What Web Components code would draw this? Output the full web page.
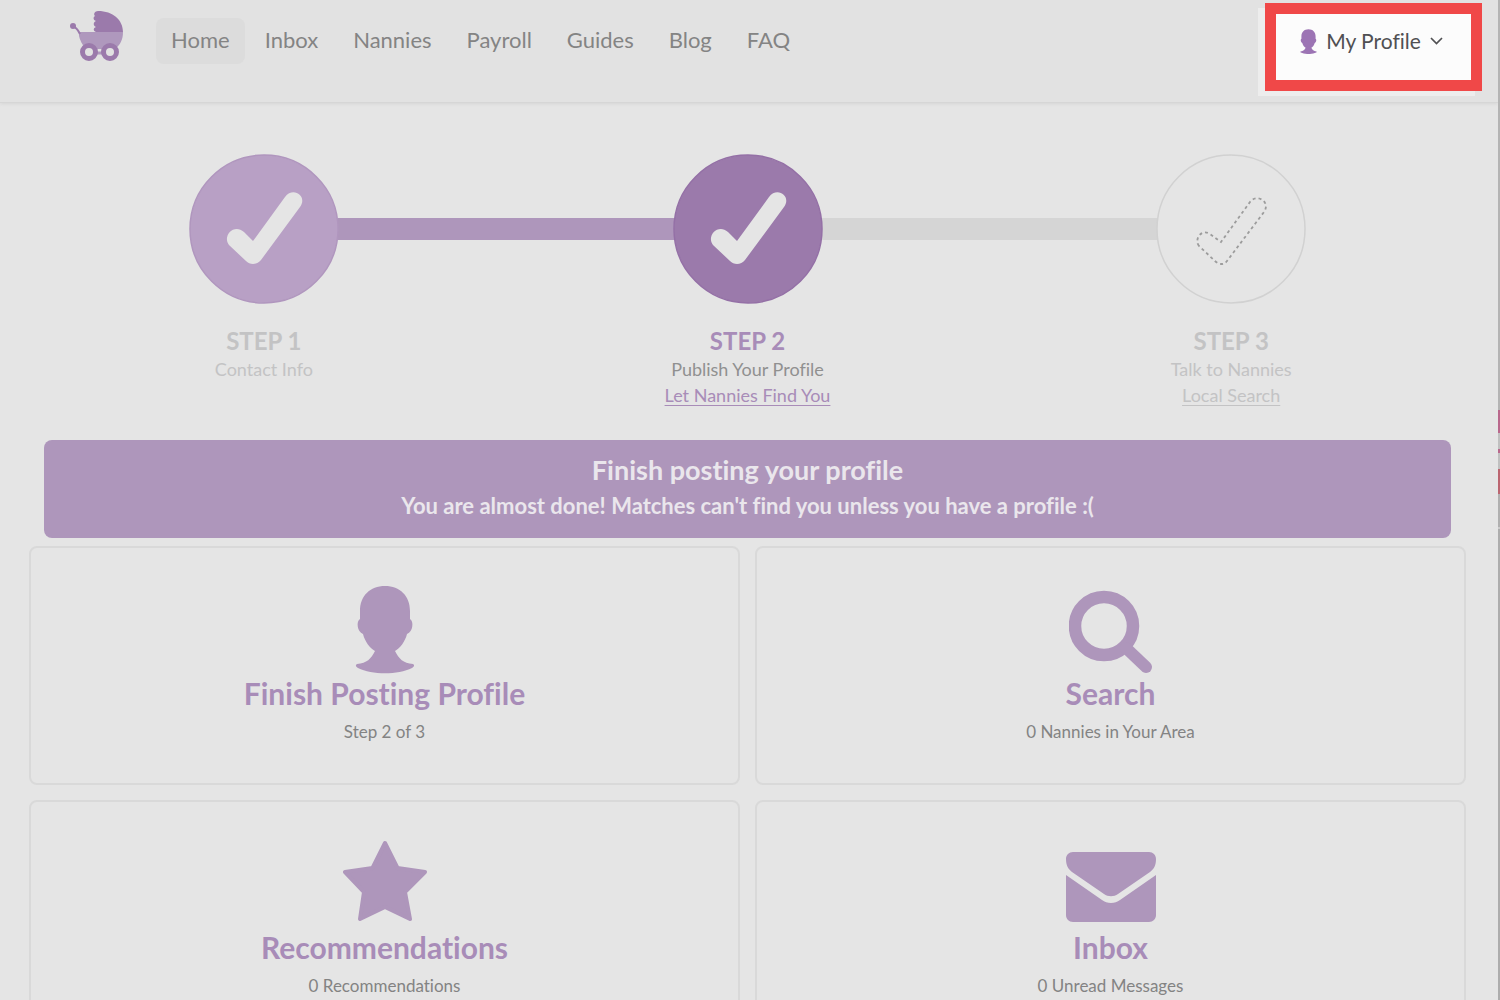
<!DOCTYPE html>
<html lang="en">
<head>
<meta charset="utf-8">
<title>Home</title>
<style>
  html { scrollbar-width: none; }
  body {
    margin: 0;
    font-family: Lato, "Open Sans", sans-serif;
    font-variant-ligatures: no-common-ligatures;
    background: #e5e5e5;
    color: #7f7f7f;
    --violet: #ae96bb;
    --violet-deep: #9b7aab;
    --violet-text: #a88cb8;
    --muted: #c3c3c4;
  }
</style>
</head>
<body>
<app-shell>
  <site-header slot="header">
    <nav-link href="#home" current>Home</nav-link>
    <nav-link href="#inbox">Inbox</nav-link>
    <nav-link href="#nannies">Nannies</nav-link>
    <nav-link href="#payroll">Payroll</nav-link>
    <nav-link href="#guides">Guides</nav-link>
    <nav-link href="#blog">Blog</nav-link>
    <nav-link href="#faq">FAQ</nav-link>
    <profile-menu slot="profile">My Profile</profile-menu>
  </site-header>
  <step-list>
    <progress-step state="done" label="STEP 1" text="Contact Info"></progress-step>
    <progress-step state="active" label="STEP 2" text="Publish Your Profile" link="Let Nannies Find You"></progress-step>
    <progress-step state="todo" label="STEP 3" text="Talk to Nannies" link="Local Search"></progress-step>
  </step-list>
  <notice-banner>
    <span slot="title">Finish posting your profile</span>
    You are almost done! Matches can't find you unless you have a profile :(
  </notice-banner>
  <card-grid>
    <action-card icon="person" href="#post"><span slot="title">Finish Posting Profile</span>Step 2 of 3</action-card>
    <action-card icon="search" href="#search"><span slot="title">Search</span>0 Nannies in Your Area</action-card>
    <action-card icon="star" href="#recommendations"><span slot="title">Recommendations</span>0 Recommendations</action-card>
    <action-card icon="mail" href="#messages"><span slot="title">Inbox</span>0 Unread Messages</action-card>
  </card-grid>
</app-shell>

<script>
const PERSON = '<path d="M29 1C14 1 4 11 4 26v8c-4 2-3 13 3 15 2 8 7 14 12 17-4 8-8 12-18 13-2 1-1 3 1 4 14 7 40 7 54 0 2-1 3-3 1-4-10-1-14-5-18-13 5-3 10-9 12-17 6-2 7-13 3-15v-8C54 11 44 1 29 1z"/>';
const ICONS = {
  person: `<svg width="60" height="90" viewBox="-1 0 60 90">${PERSON}</svg>`,
  search: '<svg width="84" height="90" viewBox="0 0 84 90"><circle cx="35" cy="41" r="29" fill="none" stroke="currentColor" stroke-width="12.500"/><path d="M57 63l20 19" stroke="currentColor" stroke-width="12" stroke-linecap="round"/></svg>',
  star: '<svg width="84" height="90" viewBox="0 4 84 90"><path stroke="currentColor" stroke-width="4" stroke-linejoin="round" d="M42 8l12.500 25L82 37 62 57l5 27-25-12-25 12 4-27L2 37l27.500-4z"/></svg>',
  mail: '<svg width="90" height="90" viewBox="0 4 90 90"><path d="M7 17h76c4 0 7 3 7 7 0 6-2 10-6 13L52 59c-4 3-10 3-14 0L6 37c-4-3-6-7-6-13 0-4 3-7 7-7z"/><path d="M0 40l36 25c5 4 13 4 18 0l36-25v40c0 4-3 7-7 7H7c-4 0-7-3-7-7z"/></svg>'
};

function define(name, render) {
  customElements.define(name, class extends HTMLElement {
    connectedCallback() {
      if (this.shadowRoot) return;
      this.attachShadow({ mode: 'open' }).innerHTML = render(this);
    }
  });
}

define('app-shell', () => `
  <style>
    :host { display: flex; }
    .page { flex: 1; min-width: 0; }
    main { padding: 51px 25px 15px 22px; }
    .edge { width: 2px; background: linear-gradient(#b4b4b4 410px, #b9688c 410px 433px, #c0c0c0 433px 449px, #b9688c 449px 453px, #c0c0c0 453px 469px, #bb6570 469px 494px, #b0b0b0 494px 527px, #ccc 527px 529px, #adadad 529px); }
  </style>
  <div class="page"><slot name="header"></slot><main><slot></slot></main></div>
  <div class="edge"></div>`);

define('site-header', () => `
  <style>
    :host { display: block; background: #e2e2e2; border-bottom: 1px solid #d6d6d6; box-shadow: 0 1px 3px #d6d6d6; }
    header { display: flex; align-items: flex-start; height: 102px; box-sizing: border-box; padding: 3px 16px 0 69px; }
    .logo { margin: 7px 32px 0 0; color: var(--violet-deep); }
    svg { display: block; }
    nav { display: flex; gap: 5px; margin-top: 15px; flex: 1; }
  </style>
  <header>
    <a class="logo" href="#home" aria-label="Home page">
      <svg width="55" height="54" viewBox="0 0 55 54">
        <path d="M10 22h44c0 8-3 13-8 17H17C13 35 11 30 10 26z" fill="#af98bd"/>
        <path d="M27 22c-3-1-3-4 0-5-3-1-3-5 0-6-3-1-3-4-1-5-2-2 0-5 3-5 15 0 25 9 25 21z" fill="currentColor"/>
        <path d="M3 17c3-1 6 3 8 7" fill="none" stroke="currentColor" stroke-width="2"/>
        <circle cx="4" cy="16" r="3" fill="currentColor"/>
        <path d="M24 43h13" stroke="#af98bd" stroke-width="3"/>
        <circle cx="20" cy="42" r="6.500" fill="#e2e2e2" stroke="currentColor" stroke-width="5"/>
        <circle cx="41" cy="42" r="6.500" fill="#e2e2e2" stroke="currentColor" stroke-width="5"/>
      </svg>
    </a>
    <nav><slot></slot></nav>
    <slot name="profile"></slot>
  </header>`);

define('nav-link', el => `
  <style>
    :host { display: block; }
    a { display: block; padding: 0 15px 2px; border-radius: 8px; font-size: 22px; line-height: 44px; color: #848484; text-decoration: none; }
    :host([current]) a { background: #dcdcdc; }
  </style>
  <a href="${el.getAttribute('href')}"><slot></slot></a>`);

define('profile-menu', () => `
  <style>
    :host { display: block; border: 11px solid #f04848; background: #fcfcfc; box-shadow: -7px 5px #ededed; }
    button { display: flex; align-items: center; justify-content: center; gap: 9px; width: 195px; height: 66px; padding: 0 4px 12px 0; border: 0; background: none; font: inherit; font-size: 21px; line-height: 30px; color: #505053; }
    .who { color: #9c74b4; fill: currentColor; }
  </style>
  <button type="button" aria-haspopup="menu">
    <svg class="who" width="17" height="25" viewBox="-1 0 60 88">${PERSON}</svg>
    <slot></slot>
    <svg width="13" height="8" viewBox="0 0 13 8"><path d="M1 1l5.500 5.500L12 1" fill="none" stroke="currentColor" stroke-width="1.700"/></svg>
  </button>`);

define('step-list', () => `
  <style>
    :host { display: grid; grid-template-columns: repeat(3, 1fr); min-height: 286px; }
  </style>
  <slot></slot>`);

const TICK = 'M40 91c-7-9 5-22 15-13l9 9 32-44c8-11 23-1 15 10l-39 53c-4 5-11 5-15 1z';
const TICK_OUTLINE = 'M43 92c-5-6 2-18 11-12l11 8 29-40c7-9 21 0 14 10l-37 49c-3 4-8 4-12 0z';
define('progress-step', el => {
  const link = el.getAttribute('link');
  const tick = el.getAttribute('state') === 'todo' ? TICK_OUTLINE : TICK;
  return `
  <style>
    :host { display: block; text-align: center; --disc: var(--violet-deep); --edge: #9470a6; --title: var(--violet-text); --copy: #909090; --before: var(--violet); --after: #d5d5d5; }
    :host([state=done]) { --disc: #b8a0c5; --edge: #b096be; --title: var(--muted); --copy: var(--muted); --before: none; --after: var(--violet); }
    :host([state=todo]) { --disc: #e5e5e5; --edge: #d1d1d1; --title: var(--muted); --copy: var(--muted); --before: #d5d5d5; --after: none; }
    .track { display: flex; align-items: center; }
    .track::before, .track::after { content: ""; flex: 1; height: 22px; background: var(--before); }
    .track::after { background: var(--after); }
    svg { display: block; position: relative; margin: 0 -1px; }
    .disc { fill: var(--disc); stroke: var(--edge); stroke-width: 1.500; }
    .tick { fill: #e5e5e5; }
    :host([state=todo]) .tick { fill: none; stroke: #9c9c9c; stroke-width: 1.800; stroke-dasharray: 3 3; }
    h2 { margin: 22px 0 0; font-size: 24px; line-height: 30px; font-weight: 700; color: var(--title); }
    p, a { display: block; margin: 0; font-size: 18px; line-height: 26px; color: var(--copy); }
    a { width: max-content; margin: 0 auto; text-underline-offset: 3px; }
    :host([state=active]) a { color: var(--violet-text); }
  </style>
  <div class="track"><svg width="150" height="150" viewBox="0 0 150 150"><circle class="disc" cx="75" cy="75" r="74"/><path class="tick" d="${tick}"/></svg></div>
  <h2>${el.getAttribute('label')}</h2>
  <p>${el.getAttribute('text')}</p>
  ${link ? `<a href="#step">${link}</a>` : ''}`;
});

define('notice-banner', () => `
  <style>
    :host { display: block; margin: 0 22px 8px; padding: 12px 0 14px; border-radius: 8px; background: var(--violet); text-align: center; color: #eae6ec; font-weight: 700; }
    h1 { margin: 0; font-size: 27px; line-height: 36px; }
    p { margin: 0; font-size: 22px; line-height: 36px; }
  </style>
  <h1><slot name="title"></slot></h1>
  <p><slot></slot></p>`);

define('card-grid', () => `
  <style>
    :host { display: grid; grid-template-columns: 1fr 1fr; gap: 15px; margin: 0 7px; }
  </style>
  <slot></slot>`);

define('action-card', el => `
  <style>
    :host { display: block; }
    a { display: flex; flex-direction: column; align-items: center; min-height: 239px; box-sizing: border-box; padding-top: 37px; border: 2px solid #d9d9d9; border-radius: 8px; color: #838383; text-decoration: none; font-size: 17px; line-height: 26px; }
    svg { display: block; color: var(--violet); fill: currentColor; }
    h2 { margin: 0 0 8px; font-size: 30px; line-height: 36px; font-weight: 700; color: var(--violet-text); }
  </style>
  <a href="${el.getAttribute('href')}">${ICONS[el.getAttribute('icon')]}<h2><slot name="title"></slot></h2><span><slot></slot></span></a>`);
</script>
</body>
</html>
